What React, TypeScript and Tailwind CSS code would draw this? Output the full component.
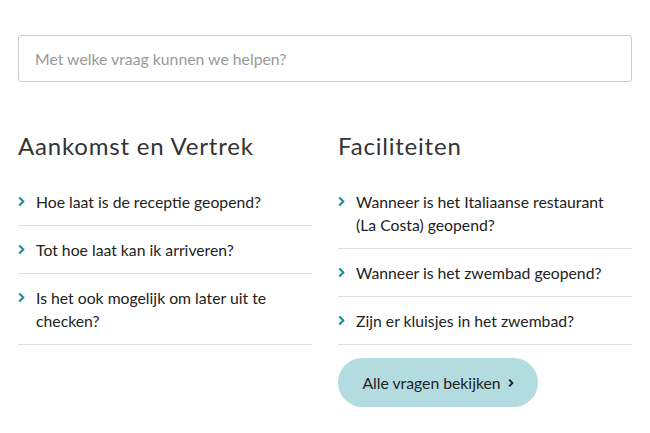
import React from "react";

const Chevron = ({ className = "" }: { className?: string }) => (
  <svg viewBox="0 0 8 12" className={className} fill="none">
    <path d="M1.5 1.5 L6 6 L1.5 10.5" stroke="currentColor" strokeWidth="2.4" />
  </svg>
);

const Item = ({ text }: { text: string }) => (
  <li className="flex border-b border-[#dddddd] py-3 pr-5">
    <Chevron className="mt-[6px] h-[11px] w-[7px] shrink-0 text-[#1d8a95]" />
    <span className="ml-[11px] text-[15.75px] leading-[23px] text-[#222222]">{text}</span>
  </li>
);

export default function App() {
  const left = [
    "Hoe laat is de receptie geopend?",
    "Tot hoe laat kan ik arriveren?",
    "Is het ook mogelijk om later uit te checken?",
  ];
  const right = [
    "Wanneer is het Italiaanse restaurant (La Costa) geopend?",
    "Wanneer is het zwembad geopend?",
    "Zijn er kluisjes in het zwembad?",
  ];
  return (
    <div className="h-[433px] w-[650px] bg-white px-[18px] pt-[35px] font-['Lato',sans-serif]">
      <div className="flex h-[47px] items-center rounded-[3px] border border-[#cccccc] px-4 text-[15.8px] text-[#999999]">
        Met welke vraag kunnen we helpen?
      </div>
      <div className="mt-[49px] grid grid-cols-2 gap-[26px]">
        <div>
          <h2 className="text-[24px] leading-[30px] tracking-[0.8px] text-[#333333]">Aankomst en Vertrek</h2>
          <ul className="mt-[17px]">
            {left.map((t) => (
              <Item key={t} text={t} />
            ))}
          </ul>
        </div>
        <div>
          <h2 className="text-[24px] leading-[30px] tracking-[0.8px] text-[#333333]">Faciliteiten</h2>
          <ul className="mt-[17px]">
            {right.map((t) => (
              <Item key={t} text={t} />
            ))}
          </ul>
          <button className="mt-[13px] flex h-[49px] w-[200px] items-center justify-center rounded-full bg-[#b3dce0] text-[15.75px] text-[#222222]">
            Alle vragen bekijken
            <Chevron className="ml-[7px] h-[10px] w-[6px] text-[#222222]" />
          </button>
        </div>
      </div>
    </div>
  );
}
